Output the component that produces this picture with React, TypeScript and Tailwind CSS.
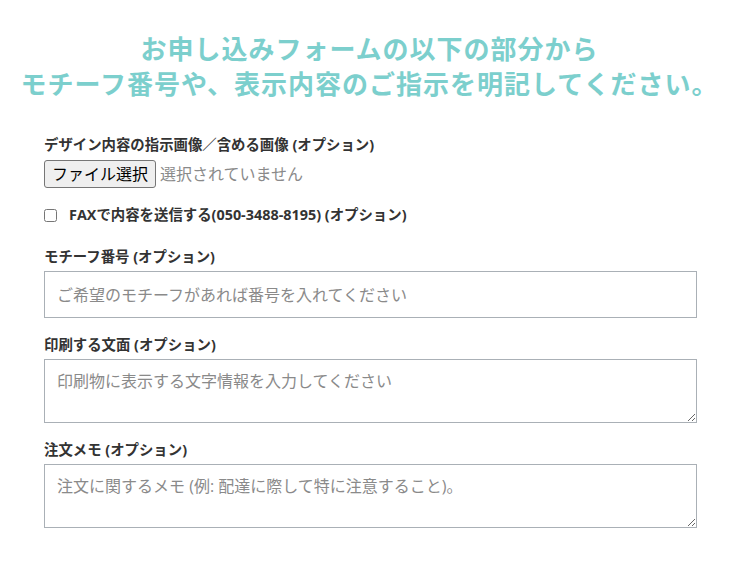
import React from 'react';

const fieldFont = { fontFamily: '"Open Sans", "Noto Sans CJK JP", sans-serif' };

const App: React.FC = () => {
    return (
        <div className="w-[739px] h-[578px] bg-white overflow-hidden" style={fieldFont}>
            <h2 className="pt-[30px] text-center text-[26px] leading-[35px] font-bold tracking-[1px] text-[#7ccfcd] font-['Noto_Sans_CJK_JP',sans-serif]">
                お申し込みフォームの以下の部分から<br />
                モチーフ番号や、表示内容のご指示を明記してください。
            </h2>

            <form className="ml-[44px] w-[653px] mt-[35px]">
                <div>
                    <label className="block text-[14.4px] leading-[20px] font-bold text-[#333]">
                        デザイン内容の指示画像／含める画像 (オプション)
                    </label>
                    <div className="flex items-center mt-[5px]">
                        <button type="button" className="h-[28px] px-[7px] text-[16px] text-black bg-[#efefef] border border-[#767676] rounded-[3px]">
                            ファイル選択
                        </button>
                        <span className="ml-[4px] text-[16px] text-[#8a8a8a]">選択されていません</span>
                    </div>
                </div>

                <div className="flex items-center mt-[17px]">
                    <input type="checkbox" className="w-[13px] h-[13px] m-0" />
                    <span className="ml-[12px] text-[14.4px] leading-[20px] font-bold text-[#333]">
                        FAXで内容を送信する(050-3488-8195) (オプション)
                    </span>
                </div>

                <div className="mt-[22px]">
                    <label className="block text-[14.4px] leading-[20px] font-bold text-[#333]">
                        モチーフ番号 (オプション)
                    </label>
                    <input
                        type="text"
                        placeholder="ご希望のモチーフがあれば番号を入れてください"
                        className="block mt-[4px] w-full h-[47px] px-[12px] text-[16px] border border-[#aab0b6] placeholder:text-[#8a8a8a] outline-none"
                    />
                </div>

                <div className="mt-[17px]">
                    <label className="block text-[14.4px] leading-[20px] font-bold text-[#333]">
                        印刷する文面 (オプション)
                    </label>
                    <textarea
                        placeholder="印刷物に表示する文字情報を入力してください"
                        className="block mt-[4px] w-full h-[64px] px-[12px] py-[10px] text-[16px] leading-[22px] border border-[#aab0b6] placeholder:text-[#8a8a8a] outline-none"
                    />
                </div>

                <div className="mt-[17px]">
                    <label className="block text-[14.4px] leading-[20px] font-bold text-[#333]">
                        注文メモ (オプション)
                    </label>
                    <textarea
                        placeholder="注文に関するメモ (例: 配達に際して特に注意すること)。"
                        className="block mt-[4px] w-full h-[64px] px-[12px] py-[10px] text-[16px] leading-[22px] border border-[#aab0b6] placeholder:text-[#8a8a8a] outline-none"
                    />
                </div>
            </form>
        </div>
    );
};

export default App;
